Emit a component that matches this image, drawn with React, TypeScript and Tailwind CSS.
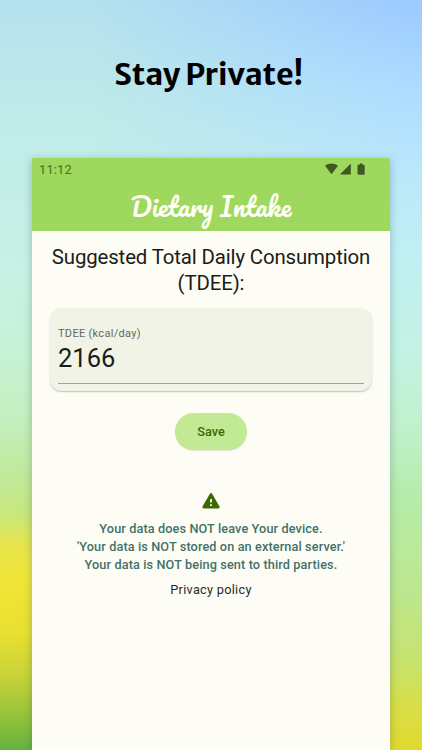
import type { ReactNode } from 'react'

const notices = [
  'Your data does NOT leave Your device.',
  "'Your data is NOT stored on an external server.'",
  'Your data is NOT being sent to third parties.',
]

function StatusIcons() {
  return (
    <svg width="42" height="14" viewBox="0 0 42 14" fill="#3d5a20">
      <path d="M0 2.7C3.8-.4 9.2-.4 13 2.7L6.5 11.3Z" />
      <path d="M25.8.6v11H14.8Z" />
      <path d="M34.7.6h2.8v1.1h1.1q1.1 0 1.1 1.1v7.9q0 1.1-1.1 1.1h-5q-1.1 0-1.1-1.1V2.8q0-1.1 1.1-1.1h1.1Z" />
    </svg>
  )
}

function WarningIcon() {
  return (
    <svg width="18" height="16" viewBox="0 0 18 16" fill="#3c6900">
      <path
        fillRule="evenodd"
        d="M7.9.7Q9-.6 10.1.7L17.5 13.6Q18 15.4 16.4 15.6H1.6Q0 15.4.5 13.6ZM8.1 6v3.6h1.8V6Zm0 5.3v1.8h1.8v-1.8Z"
      />
    </svg>
  )
}

function AppBar() {
  return (
    <header className="h-[73px] bg-[#9fd85e]">
      <div className="flex h-[23px] items-center justify-between pl-[7px] pr-[23px]">
        <span className="text-[12.8px] tracking-[0.2px] text-[#477020]">11:12</span>
        <StatusIcons />
      </div>
      <h2 className="flex h-[50px] items-center justify-center pt-[2px] font-['Pacifico',cursive] text-[25.6px] whitespace-nowrap text-[#fffff6]">
        Dietary Intake
      </h2>
    </header>
  )
}

function Phone({ children }: { children: ReactNode }) {
  return (
    <main className="relative ml-8 h-[592px] w-[358px] bg-[#fefdf5] font-[Roboto,sans-serif] shadow-[0_2px_8px_rgba(40,90,90,0.35)]">
      {children}
    </main>
  )
}

export default function App() {
  return (
    <div className="relative h-[750px] w-[422px] overflow-hidden bg-[linear-gradient(180deg,#b5e1ef_0px,#c0ebe9_120px,#c7f1e5_270px,#c7f2d6_350px,#c4efbe_420px,#c1e998_480px,#c8e77b_515px,#e8e54c_545px,#f1e536_585px,#e7df31_635px,#c9d338_675px,#93c33a_718px,#63b141_750px)]">
      <div className="absolute inset-0 bg-[linear-gradient(180deg,#9ccaff_0px,#addcff_90px,#bbe7fb_170px,#c1eff2_260px,#c4f2e4_350px,#c1f1cf_420px,#b6eca9_500px,#bce78f_590px,#c6e36e_660px,#d9de45_710px,#e1d92f_750px)] mask-[linear-gradient(92deg,transparent_22%,black_90%)]" />
      <h1 className="relative flex h-[158px] justify-center pt-[51px] pr-[5px] font-['Merriweather_Sans','Noto_Sans',sans-serif] text-[30.6px] leading-[46px] font-bold tracking-[-0.2px] text-black">
        Stay Private!
      </h1>
      <Phone>
        <AppBar />
        <section className="flex flex-col items-center px-[18px]">
          <h3 className="mt-[14px] text-center text-[20.4px] leading-[25.5px] tracking-[-0.13px] whitespace-nowrap text-[#1b1c18]">
            Suggested Total Daily Consumption
            <br />
            (TDEE):
          </h3>
          <div className="mt-[12px] h-[83px] w-full rounded-[12px] bg-[#f1f3e7] px-[8px] shadow-[0_1px_1.5px_rgba(0,0,0,0.25)]">
            <label className="block pt-[18px] text-[11px] leading-[15px] tracking-[0.3px] text-[#65675e]">
              TDEE (kcal/day)
            </label>
            <div className="h-[43px] border-b border-[#a1a498] text-[25.5px] leading-[34px] text-[#1b1c18]">
              2166
            </div>
          </div>
          <button
            type="button"
            className="mt-[22px] h-[37px] w-[72px] rounded-full bg-[#c2e993] text-[12.7px] font-medium text-[#3c6900] shadow-[0_1px_1px_rgba(0,0,0,0.12)]"
          >
            Save
          </button>
          <div className="mt-[43px] h-4">
            <WarningIcon />
          </div>
          <div className="mt-[10.5px] text-center text-[12.7px] leading-[18.3px] font-medium tracking-[0.12px] whitespace-nowrap text-[#42716a]">
            {notices.map((notice) => (
              <p key={notice}>{notice}</p>
            ))}
          </div>
          <a className="mt-[7px] text-[12.7px] leading-[18px] tracking-[0.3px] text-[#292a26]">
            Privacy policy
          </a>
        </section>
      </Phone>
    </div>
  )
}
